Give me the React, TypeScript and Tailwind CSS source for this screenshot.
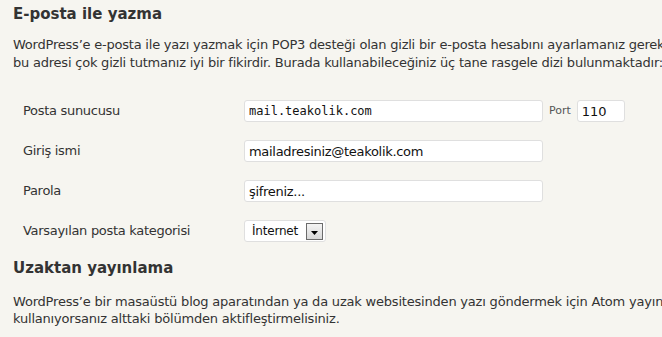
import React from "react";

const verdana = { fontFamily: '"DejaVu Sans", Verdana, sans-serif' };

const Row = ({ label, children }: { label: string; children: React.ReactNode }) => (
  <div className="flex items-center h-[40px]">
    <div className="w-[231px] pl-[10px] text-[13px] tracking-[-0.3px] text-[#333]">{label}</div>
    {children}
  </div>
);

const inputCls =
  "w-[299px] h-[22px] bg-white border border-[#dfdfdf] rounded-[3px] px-[4px] text-[13px] tracking-[-0.3px] text-[#111] outline-none";

const App = () => {
  return (
    <div className="w-[662px] h-[337px] overflow-hidden bg-[#f6f5f0] text-[#333]" style={verdana}>
      <div className="pl-[13px] pt-[3px] whitespace-nowrap">
        <h2 className="text-[15px] font-bold leading-[22px] text-[#333]">E-posta ile yazma</h2>
        <p className="mt-[11px] text-[13px] leading-[18px] tracking-[-0.22px]">
          WordPress’e e-posta ile yazı yazmak için POP3 desteği olan gizli bir e-posta hesabını ayarlamanız gerekiyor.
          <br />
          bu adresi çok gizli tutmanız iyi bir fikirdir. Burada kullanabileceğiniz üç tane rasgele dizi bulunmaktadır:{" "}
          <span className="inline-block w-[6px] h-[14px] bg-[#e6e4de] align-middle"></span>
        </p>

        <div className="mt-[19px]">
          <Row label="Posta sunucusu">
            <input
              readOnly
              value="mail.teakolik.com"
              className="w-[299px] h-[22px] bg-white border border-[#dfdfdf] rounded-[3px] px-[4px] text-[12px] text-[#111] outline-none"
              style={{ fontFamily: '"DejaVu Sans Mono", monospace' }}
            />
            <span className="ml-[6px] text-[11px] text-[#555]">Port</span>
            <input
              readOnly
              value="110"
              className="ml-[6px] w-[48px] h-[22px] bg-white border border-[#dfdfdf] rounded-[3px] px-[4px] text-[13px] text-[#111] outline-none"
              style={verdana}
            />
          </Row>
          <Row label="Giriş ismi">
            <input readOnly value="mailadresiniz@teakolik.com" className={inputCls} style={verdana} />
          </Row>
          <Row label="Parola">
            <input readOnly value="şifreniz..." className={inputCls} style={verdana} />
          </Row>
          <Row label="Varsayılan posta kategorisi">
            <div className="w-[82px] h-[22px] bg-white border border-[#dfdfdf] rounded-[3px] flex items-center justify-between pl-[7px] pr-[2px]">
              <span className="text-[12px] tracking-[-0.2px] text-[#111]">İnternet</span>
              <span className="w-[17px] h-[17px] border border-[#6b6b6b] bg-gradient-to-b from-[#f4f4f4] to-[#d8d8d8] flex items-end justify-center pb-[4px]">
                <svg width="7" height="4" viewBox="0 0 7 4">
                  <path d="M0 0h7L3.5 4z" fill="#000" />
                </svg>
              </span>
            </div>
          </Row>
        </div>

        <h2 className="mt-[6px] text-[15px] font-bold leading-[22px] text-[#333]">Uzaktan yayınlama</h2>
        <p className="mt-[14px] text-[13px] leading-[17px] tracking-[-0.2px]">
          WordPress’e bir masaüstü blog aparatından ya da uzak websitesinden yazı göndermek için Atom yayınlama protokolünü
          <br />
          kullanıyorsanız alttaki bölümden aktifleştirmelisiniz.
        </p>
      </div>
    </div>
  );
};

export default App;
